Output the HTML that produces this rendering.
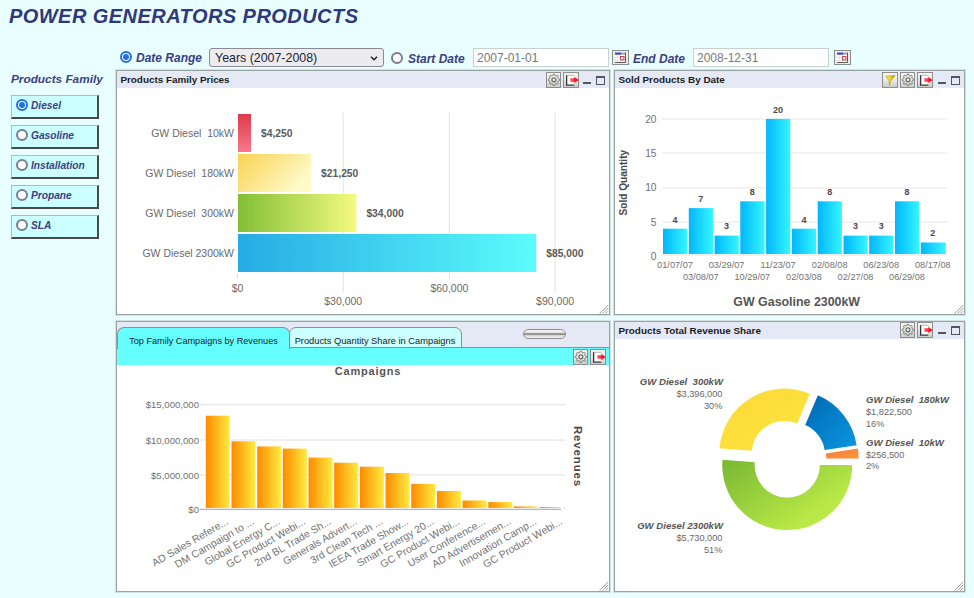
<!DOCTYPE html>
<html><head><meta charset="utf-8">
<style>
*{box-sizing:border-box;margin:0;padding:0}
html,body{width:974px;height:598px;overflow:hidden}
body{background:#e9fefe;font-family:"Liberation Sans",sans-serif;position:relative}
.a{position:absolute;white-space:nowrap}
.title{left:9px;top:4px;font-size:20px;line-height:24px;font-weight:bold;font-style:italic;color:#30377a;letter-spacing:0.45px}
.lbl{font-size:12px;line-height:14px;font-weight:bold;font-style:italic;color:#3b4080}
.radio{width:12px;height:12px;border-radius:50%;border:2px solid #7c7c8a;background:#fff}
.radio.on{border:2px solid #1f6fe8;background:#fff}
.radio.on::after{content:"";position:absolute;left:1px;top:1px;width:6px;height:6px;border-radius:50%;background:#1f6fe8}
.fbtn{left:11px;width:88px;height:24px;background:#ccffff;border-top:1px solid #b8b8b8;border-left:1px solid #b8b8b8;border-right:2px solid #4a4a4a;border-bottom:2px solid #4a4a4a}
.fbtn .radio{position:absolute;left:4px;top:2.5px}
.fbtn span{position:absolute;left:19px;top:3px;font-size:10.2px;line-height:14px;font-weight:bold;font-style:italic;color:#3b4080}
.sel{left:209px;top:48px;width:175px;height:19px;background:#ececef;border:1px solid #8a8a90;border-radius:3px;font-size:12.4px;line-height:19px;padding-left:5px;color:#22223a}
.inp{top:48px;height:19px;background:#fdfefe;border:1px solid #c8d0d0;font-size:12px;line-height:18.5px;padding-left:3px;color:#7a7a7a}
.cal{top:50px;width:17px;height:15px}
.panel{background:#fff;border:1px solid #9aa2a2;box-shadow:0 0 0 1px rgba(170,176,176,0.35)}
.ph{position:absolute;left:0;top:0;right:0;height:17px;background:#e4e9f5}
.pt{position:absolute;left:3.4px;top:2px;font-size:9.9px;line-height:13px;font-weight:bold;color:#1c1c1c}
.tab{position:absolute;top:4.8px;height:21px;border:1px solid #8e8e8e;border-radius:7px 7px 0 0;font-size:9.15px;line-height:19px;padding-top:4.6px;color:#222;text-align:center}
.strip{position:absolute;left:0;right:0;top:25.4px;height:17.6px;background:#66ffff;border-top:1px solid #909090}
</style></head>
<body>
<div class="a title">POWER GENERATORS PRODUCTS</div>

<!-- top controls -->
<div class="a radio on" style="left:120px;top:51px"></div>
<div class="a lbl" style="left:136px;top:51px">Date Range</div>
<div class="a sel">Years (2007-2008)<svg style="position:absolute;right:5px;top:7px" width="8" height="5" viewBox="0 0 8 5"><path d="M1 0.8 L4 3.8 L7 0.8" fill="none" stroke="#222" stroke-width="1.5"/></svg></div>
<div class="a radio" style="left:391px;top:52px"></div>
<div class="a lbl" style="left:408px;top:52px">Start Date</div>
<div class="a inp" style="left:473px;width:136px">2007-01-01</div>
<svg class="a cal" style="left:612px" width="17" height="15" viewBox="0 0 17 15"><rect x="0.5" y="0.5" width="16" height="14" fill="#ededed" stroke="#8c8c8c"/><rect x="3" y="2.5" width="10" height="10" fill="#fff"/><path d="M3 12.5H13.5V2.5" fill="none" stroke="#5a5a5a" stroke-width="1"/><rect x="3" y="2.5" width="6.5" height="2.2" fill="#3c48b4"/><rect x="9.5" y="2.5" width="3.5" height="2.2" fill="#a8a8a8"/><path d="M3 7.5H13M3 10.5H13M5.5 5V12M8.5 5V12" stroke="#dcdcdc" stroke-width="0.7"/><rect x="8.5" y="6.5" width="3.5" height="3.5" fill="#f4dcdc" stroke="#c24a4a" stroke-width="1"/></svg>
<div class="a lbl" style="left:633px;top:52px">End Date</div>
<div class="a inp" style="left:693px;width:136px">2008-12-31</div>
<svg class="a cal" style="left:834px" width="17" height="15" viewBox="0 0 17 15"><rect x="0.5" y="0.5" width="16" height="14" fill="#ededed" stroke="#8c8c8c"/><rect x="3" y="2.5" width="10" height="10" fill="#fff"/><path d="M3 12.5H13.5V2.5" fill="none" stroke="#5a5a5a" stroke-width="1"/><rect x="3" y="2.5" width="6.5" height="2.2" fill="#3c48b4"/><rect x="9.5" y="2.5" width="3.5" height="2.2" fill="#a8a8a8"/><path d="M3 7.5H13M3 10.5H13M5.5 5V12M8.5 5V12" stroke="#dcdcdc" stroke-width="0.7"/><rect x="8.5" y="6.5" width="3.5" height="3.5" fill="#f4dcdc" stroke="#c24a4a" stroke-width="1"/></svg>

<!-- left family -->
<div class="a lbl" style="left:11px;top:72px;font-size:11.8px">Products Family</div>
<div class="a fbtn" style="top:95px"><div class="radio on"></div><span>Diesel</span></div>
<div class="a fbtn" style="top:125px"><div class="radio"></div><span>Gasoline</span></div>
<div class="a fbtn" style="top:155px"><div class="radio"></div><span>Installation</span></div>
<div class="a fbtn" style="top:185px"><div class="radio"></div><span>Propane</span></div>
<div class="a fbtn" style="top:215px"><div class="radio"></div><span>SLA</span></div>

<!-- panels -->
<div class="a panel" style="left:116px;top:70px;width:494px;height:245px">
  <div class="ph"><div class="pt">Products Family Prices</div></div>
</div>
<div class="a panel" style="left:614px;top:70px;width:351px;height:245px">
  <div class="ph"><div class="pt">Sold Products By Date</div></div>
</div>
<div class="a panel" style="left:116px;top:321px;width:494px;height:271px">
  <div class="ph" style="height:26px"></div>
  <div class="strip"></div>
  <div class="tab" style="left:0;width:173px;background:#66ffff;border-bottom:none;height:22.4px">Top Family Campaigns by Revenues</div>
  <div class="tab" style="left:172px;width:173px;padding-right:1px;font-size:9.3px;background:#ccffff;height:21px;border-radius:7px 7px 0 0">Products Quantity Share in Campaigns</div>
</div>
<div class="a panel" style="left:614px;top:321px;width:351px;height:271px">
  <div class="ph"><div class="pt">Products Total Revenue Share</div></div>
</div>
<svg class="a" style="left:0;top:0" width="974" height="598" viewBox="0 0 974 598">
<defs>
 <linearGradient id="gRed" x1="0" y1="0" x2="0" y2="1"><stop offset="0" stop-color="#de3a4c"/><stop offset="1" stop-color="#f9788a"/></linearGradient>
 <linearGradient id="gYel" x1="0" y1="0" x2="1" y2="0.5"><stop offset="0" stop-color="#f8d252"/><stop offset="1" stop-color="#fffac8"/></linearGradient>
 <linearGradient id="gGrn" x1="0" y1="0" x2="1" y2="0"><stop offset="0" stop-color="#82bf36"/><stop offset="1" stop-color="#f4fa80"/></linearGradient>
 <linearGradient id="gBlu" x1="0" y1="0" x2="1" y2="0"><stop offset="0" stop-color="#26abe4"/><stop offset="1" stop-color="#5cfcfc"/></linearGradient>
 <linearGradient id="gCyan" x1="0" y1="0" x2="1" y2="0"><stop offset="0" stop-color="#02b6fc"/><stop offset="1" stop-color="#34f6ff"/></linearGradient>
 <linearGradient id="gOr" x1="0" y1="0" x2="1" y2="0"><stop offset="0" stop-color="#ff8a00"/><stop offset="1" stop-color="#ffec40"/></linearGradient>
 <linearGradient id="dGrn" x1="0" y1="0.1" x2="1" y2="0.9"><stop offset="0" stop-color="#7cba34"/><stop offset="0.75" stop-color="#b8e846"/><stop offset="1" stop-color="#c4f04a"/></linearGradient>
 <linearGradient id="dYel" x1="0" y1="0" x2="1" y2="1"><stop offset="0" stop-color="#fad83a"/><stop offset="1" stop-color="#ffe63c"/></linearGradient>
 <linearGradient id="dBlu" x1="0" y1="0" x2="1" y2="1"><stop offset="0" stop-color="#0068b4"/><stop offset="1" stop-color="#0a98e0"/></linearGradient>
 <linearGradient id="dOr" x1="0" y1="0" x2="1" y2="1"><stop offset="0" stop-color="#f27e36"/><stop offset="1" stop-color="#ff9440"/></linearGradient>
 <linearGradient id="btnG" x1="0" y1="0" x2="0" y2="1"><stop offset="0" stop-color="#f6f6f4"/><stop offset="0.5" stop-color="#ebebe8"/><stop offset="1" stop-color="#c9c9c5"/></linearGradient>
 <linearGradient id="pillG" x1="0" y1="0" x2="0" y2="1"><stop offset="0" stop-color="#fcfcfc"/><stop offset="0.35" stop-color="#e4e4e4"/><stop offset="0.5" stop-color="#6c6c6c"/><stop offset="0.65" stop-color="#d4d4d4"/><stop offset="1" stop-color="#fafafa"/></linearGradient>
 <linearGradient id="arrG" x1="0" y1="0" x2="1" y2="0"><stop offset="0" stop-color="#ff6070"/><stop offset="0.7" stop-color="#ff1020"/><stop offset="1" stop-color="#c00010"/></linearGradient>
 <linearGradient id="funG" x1="0" y1="0" x2="1" y2="0"><stop offset="0" stop-color="#f8e850"/><stop offset="0.55" stop-color="#e8d020"/><stop offset="1" stop-color="#a89000"/></linearGradient>
</defs>
<line x1="237.5" y1="273" x2="237.5" y2="279" stroke="#e2e2e2" stroke-width="1"/>
<text x="237.5" y="291.8" text-anchor="middle" font-size="10.5" fill="#6a6a6a" font-family="Liberation Sans">$0</text>
<line x1="343.2" y1="112.5" x2="343.2" y2="292" stroke="#e2e2e2" stroke-width="1"/>
<text x="343.2" y="304.7" text-anchor="middle" font-size="10.5" fill="#6a6a6a" font-family="Liberation Sans">$30,000</text>
<line x1="449.4" y1="112.5" x2="449.4" y2="279" stroke="#e2e2e2" stroke-width="1"/>
<text x="449.4" y="291.8" text-anchor="middle" font-size="10.5" fill="#6a6a6a" font-family="Liberation Sans">$60,000</text>
<line x1="555.1" y1="112.5" x2="555.1" y2="292" stroke="#e2e2e2" stroke-width="1"/>
<text x="555.1" y="304.7" text-anchor="middle" font-size="10.5" fill="#6a6a6a" font-family="Liberation Sans">$90,000</text>
<rect x="238" y="114" width="13.0" height="38" fill="url(#gRed)"/>
<text x="234" y="136.8" text-anchor="end" font-size="10.5" fill="#6a6a6a" xml:space="preserve" font-family="Liberation Sans">GW Diesel  10kW</text>
<text x="261.0" y="136.8" font-size="10.3" font-weight="bold" fill="#5a5a5a" font-family="Liberation Sans">$4,250</text>
<rect x="238" y="154" width="73.1" height="38" fill="url(#gYel)"/>
<text x="234" y="176.8" text-anchor="end" font-size="10.5" fill="#6a6a6a" xml:space="preserve" font-family="Liberation Sans">GW Diesel  180kW</text>
<text x="321.1" y="176.8" font-size="10.3" font-weight="bold" fill="#5a5a5a" font-family="Liberation Sans">$21,250</text>
<rect x="238" y="194" width="118.4" height="38" fill="url(#gGrn)"/>
<text x="234" y="216.8" text-anchor="end" font-size="10.5" fill="#6a6a6a" xml:space="preserve" font-family="Liberation Sans">GW Diesel  300kW</text>
<text x="366.4" y="216.8" font-size="10.3" font-weight="bold" fill="#5a5a5a" font-family="Liberation Sans">$34,000</text>
<rect x="238" y="234" width="298.2" height="38" fill="url(#gBlu)"/>
<text x="234" y="256.8" text-anchor="end" font-size="10.5" fill="#6a6a6a" xml:space="preserve" font-family="Liberation Sans">GW Diesel 2300kW</text>
<text x="546.2" y="256.8" font-size="10.3" font-weight="bold" fill="#5a5a5a" font-family="Liberation Sans">$85,000</text>
<line x1="662" y1="255.0" x2="947" y2="255.0" stroke="#eadede" stroke-width="1"/>
<text x="656.5" y="259.8" text-anchor="end" font-size="10.2" fill="#707070" font-family="Liberation Sans">0</text>
<line x1="662" y1="222.0" x2="947" y2="222.0" stroke="#e6e6e6" stroke-width="1"/>
<text x="656.5" y="225.5" text-anchor="end" font-size="10.2" fill="#707070" font-family="Liberation Sans">5</text>
<line x1="662" y1="188.0" x2="947" y2="188.0" stroke="#e6e6e6" stroke-width="1"/>
<text x="656.5" y="191.1" text-anchor="end" font-size="10.2" fill="#707070" font-family="Liberation Sans">10</text>
<line x1="662" y1="153.0" x2="947" y2="153.0" stroke="#e6e6e6" stroke-width="1"/>
<text x="656.5" y="156.8" text-anchor="end" font-size="10.2" fill="#707070" font-family="Liberation Sans">15</text>
<line x1="662" y1="119.0" x2="947" y2="119.0" stroke="#e6e6e6" stroke-width="1"/>
<text x="656.5" y="122.5" text-anchor="end" font-size="10.2" fill="#707070" font-family="Liberation Sans">20</text>
<rect x="663.0" y="228.7" width="24.2" height="25.3" fill="url(#gCyan)"/>
<text x="675.0" y="222.5" text-anchor="middle" font-size="9" font-weight="bold" fill="#4a4a4a" font-family="Liberation Sans">4</text>
<text x="675.0" y="268.2" text-anchor="middle" font-size="9.2" fill="#727272" font-family="Liberation Sans">01/07/07</text>
<rect x="688.8" y="208.1" width="24.2" height="45.9" fill="url(#gCyan)"/>
<text x="700.8" y="201.9" text-anchor="middle" font-size="9" font-weight="bold" fill="#4a4a4a" font-family="Liberation Sans">7</text>
<text x="700.8" y="280.2" text-anchor="middle" font-size="9.2" fill="#727272" font-family="Liberation Sans">03/08/07</text>
<rect x="714.6" y="235.6" width="24.2" height="18.4" fill="url(#gCyan)"/>
<text x="726.6" y="229.4" text-anchor="middle" font-size="9" font-weight="bold" fill="#4a4a4a" font-family="Liberation Sans">3</text>
<text x="726.6" y="268.2" text-anchor="middle" font-size="9.2" fill="#727272" font-family="Liberation Sans">03/29/07</text>
<rect x="740.3" y="201.3" width="24.2" height="52.7" fill="url(#gCyan)"/>
<text x="752.3" y="195.1" text-anchor="middle" font-size="9" font-weight="bold" fill="#4a4a4a" font-family="Liberation Sans">8</text>
<text x="752.3" y="280.2" text-anchor="middle" font-size="9.2" fill="#727272" font-family="Liberation Sans">10/29/07</text>
<rect x="766.1" y="118.9" width="24.2" height="135.1" fill="url(#gCyan)"/>
<text x="778.1" y="112.7" text-anchor="middle" font-size="9" font-weight="bold" fill="#4a4a4a" font-family="Liberation Sans">20</text>
<text x="778.1" y="268.2" text-anchor="middle" font-size="9.2" fill="#727272" font-family="Liberation Sans">11/23/07</text>
<rect x="791.9" y="228.7" width="24.2" height="25.3" fill="url(#gCyan)"/>
<text x="803.9" y="222.5" text-anchor="middle" font-size="9" font-weight="bold" fill="#4a4a4a" font-family="Liberation Sans">4</text>
<text x="803.9" y="280.2" text-anchor="middle" font-size="9.2" fill="#727272" font-family="Liberation Sans">02/03/08</text>
<rect x="817.7" y="201.3" width="24.2" height="52.7" fill="url(#gCyan)"/>
<text x="829.7" y="195.1" text-anchor="middle" font-size="9" font-weight="bold" fill="#4a4a4a" font-family="Liberation Sans">8</text>
<text x="829.7" y="268.2" text-anchor="middle" font-size="9.2" fill="#727272" font-family="Liberation Sans">02/08/08</text>
<rect x="843.5" y="235.6" width="24.2" height="18.4" fill="url(#gCyan)"/>
<text x="855.5" y="229.4" text-anchor="middle" font-size="9" font-weight="bold" fill="#4a4a4a" font-family="Liberation Sans">3</text>
<text x="855.5" y="280.2" text-anchor="middle" font-size="9.2" fill="#727272" font-family="Liberation Sans">02/27/08</text>
<rect x="869.2" y="235.6" width="24.2" height="18.4" fill="url(#gCyan)"/>
<text x="881.2" y="229.4" text-anchor="middle" font-size="9" font-weight="bold" fill="#4a4a4a" font-family="Liberation Sans">3</text>
<text x="881.2" y="268.2" text-anchor="middle" font-size="9.2" fill="#727272" font-family="Liberation Sans">06/23/08</text>
<rect x="895.0" y="201.3" width="24.2" height="52.7" fill="url(#gCyan)"/>
<text x="907.0" y="195.1" text-anchor="middle" font-size="9" font-weight="bold" fill="#4a4a4a" font-family="Liberation Sans">8</text>
<text x="907.0" y="280.2" text-anchor="middle" font-size="9.2" fill="#727272" font-family="Liberation Sans">06/29/08</text>
<rect x="920.8" y="242.5" width="25" height="11.5" fill="url(#gCyan)"/>
<text x="932.8" y="236.3" text-anchor="middle" font-size="9" font-weight="bold" fill="#4a4a4a" font-family="Liberation Sans">2</text>
<text x="932.8" y="268.2" text-anchor="middle" font-size="9.2" fill="#727272" font-family="Liberation Sans">08/17/08</text>
<text transform="translate(626.8,182.7) rotate(-90)" text-anchor="middle" font-size="10.1" font-weight="bold" fill="#4a4a4a" font-family="Liberation Sans">Sold Quantity</text>
<text x="796.7" y="305.8" text-anchor="middle" font-size="12.4" font-weight="bold" fill="#555" font-family="Liberation Sans">GW Gasoline 2300kW</text>
<line x1="200" y1="404.8" x2="566" y2="404.8" stroke="#e0e0e0" stroke-width="1"/>
<line x1="200" y1="440.0" x2="566" y2="440.0" stroke="#e0e0e0" stroke-width="1"/>
<line x1="200" y1="474.9" x2="566" y2="474.9" stroke="#e0e0e0" stroke-width="1"/>
<text x="199" y="408.40000000000003" text-anchor="end" font-size="9.6" fill="#707070" font-family="Liberation Sans">$15,000,000</text>
<text x="199" y="443.6" text-anchor="end" font-size="9.6" fill="#707070" font-family="Liberation Sans">$10,000,000</text>
<text x="199" y="478.5" text-anchor="end" font-size="9.6" fill="#707070" font-family="Liberation Sans">$5,000,000</text>
<text x="199" y="512.8" text-anchor="end" font-size="9.6" fill="#707070" font-family="Liberation Sans">$0</text>
<line x1="200" y1="509.3" x2="561" y2="509.3" stroke="#b4b4b4" stroke-width="1.2"/>
<rect x="205.8" y="415.7" width="24" height="92.3" fill="url(#gOr)"/>
<text transform="translate(229.1,523.6) rotate(-30)" text-anchor="end" font-size="10.4" fill="#747474" xml:space="preserve" font-family="Liberation Sans">AD Sales Refere...</text>
<rect x="231.5" y="441.3" width="24" height="66.7" fill="url(#gOr)"/>
<text transform="translate(254.8,523.6) rotate(-30)" text-anchor="end" font-size="10.4" fill="#747474" xml:space="preserve" font-family="Liberation Sans">DM Campaign to ...</text>
<rect x="257.2" y="446.4" width="24" height="61.6" fill="url(#gOr)"/>
<text transform="translate(280.5,523.6) rotate(-30)" text-anchor="end" font-size="10.4" fill="#747474" xml:space="preserve" font-family="Liberation Sans">Global Energy C...</text>
<rect x="282.8" y="448.6" width="24" height="59.4" fill="url(#gOr)"/>
<text transform="translate(306.1,523.6) rotate(-30)" text-anchor="end" font-size="10.4" fill="#747474" xml:space="preserve" font-family="Liberation Sans">GC Product Webi...</text>
<rect x="308.5" y="457.6" width="24" height="50.4" fill="url(#gOr)"/>
<text transform="translate(331.8,523.6) rotate(-30)" text-anchor="end" font-size="10.4" fill="#747474" xml:space="preserve" font-family="Liberation Sans">2nd BL Trade Sh...</text>
<rect x="334.2" y="462.7" width="24" height="45.3" fill="url(#gOr)"/>
<text transform="translate(357.5,523.6) rotate(-30)" text-anchor="end" font-size="10.4" fill="#747474" xml:space="preserve" font-family="Liberation Sans">Generals Advert...</text>
<rect x="359.9" y="466.7" width="24" height="41.3" fill="url(#gOr)"/>
<text transform="translate(383.2,523.6) rotate(-30)" text-anchor="end" font-size="10.4" fill="#747474" xml:space="preserve" font-family="Liberation Sans">3rd Clean Tech ...</text>
<rect x="385.6" y="473.0" width="24" height="35.0" fill="url(#gOr)"/>
<text transform="translate(408.9,523.6) rotate(-30)" text-anchor="end" font-size="10.4" fill="#747474" xml:space="preserve" font-family="Liberation Sans">IEEA Trade Show...</text>
<rect x="411.2" y="483.9" width="24" height="24.1" fill="url(#gOr)"/>
<text transform="translate(434.5,523.6) rotate(-30)" text-anchor="end" font-size="10.4" fill="#747474" xml:space="preserve" font-family="Liberation Sans">Smart Energy 20...</text>
<rect x="436.9" y="491.0" width="24" height="17.0" fill="url(#gOr)"/>
<text transform="translate(460.2,523.6) rotate(-30)" text-anchor="end" font-size="10.4" fill="#747474" xml:space="preserve" font-family="Liberation Sans">GC Product Webi...</text>
<rect x="462.6" y="500.5" width="24" height="7.5" fill="url(#gOr)"/>
<text transform="translate(485.9,523.6) rotate(-30)" text-anchor="end" font-size="10.4" fill="#747474" xml:space="preserve" font-family="Liberation Sans">User Conference...</text>
<rect x="488.3" y="502.1" width="24" height="5.9" fill="url(#gOr)"/>
<text transform="translate(511.6,523.6) rotate(-30)" text-anchor="end" font-size="10.4" fill="#747474" xml:space="preserve" font-family="Liberation Sans">AD Advertisemen...</text>
<rect x="514.0" y="506.4" width="24" height="1.6" fill="url(#gOr)"/>
<text transform="translate(537.3,523.6) rotate(-30)" text-anchor="end" font-size="10.4" fill="#747474" xml:space="preserve" font-family="Liberation Sans">Innovation Camp...</text>
<rect x="539.6" y="507.0" width="20.8" height="1.0" fill="url(#gOr)"/>
<text transform="translate(562.9,523.6) rotate(-30)" text-anchor="end" font-size="10.4" fill="#747474" xml:space="preserve" font-family="Liberation Sans">GC Product Webi...</text>
<rect x="563" y="507.3" width="2" height="0.8" fill="#ffe060"/>
<text x="368" y="374.9" text-anchor="middle" font-size="11" font-weight="bold" letter-spacing="0.8" fill="#555" font-family="Liberation Sans">Campaigns</text>
<text transform="translate(574.2,456.5) rotate(90)" text-anchor="middle" font-size="11.4" font-weight="bold" letter-spacing="0.9" fill="#484848" font-family="Liberation Sans">Revenues</text>
<path d="M852.24 465.09 A65.0 65.0 0 1 1 722.47 459.66 L754.75 462.37 A32.6 32.6 0 1 0 819.84 465.09 Z" fill="url(#dGrn)"/>
<path d="M719.53 448.15 A65.0 65.0 0 0 1 809.80 393.80 L797.09 423.60 A32.6 32.6 0 0 0 751.82 450.86 Z" fill="url(#dYel)"/>
<path d="M817.90 395.31 A65.0 65.0 0 0 1 856.63 445.15 L824.61 450.11 A32.6 32.6 0 0 0 805.19 425.11 Z" fill="url(#dBlu)"/>
<path d="M857.92 448.48 A65.0 65.0 0 0 1 858.68 458.42 L826.28 458.42 A32.6 32.6 0 0 0 825.90 453.44 Z" fill="url(#dOr)"/>
<text x="723" y="384.8" text-anchor="end" font-size="9.6" font-weight="bold" font-style="italic" fill="#555" xml:space="preserve" font-family="Liberation Sans">GW Diesel  300kW</text>
<text x="722.4" y="396.8" text-anchor="end" font-size="9.2" fill="#686868" font-family="Liberation Sans">$3,396,000</text>
<text x="722.4" y="408.6" text-anchor="end" font-size="9.2" fill="#686868" font-family="Liberation Sans">30%</text>
<text x="866" y="403.2" text-anchor="start" font-size="9.6" font-weight="bold" font-style="italic" fill="#555" xml:space="preserve" font-family="Liberation Sans">GW Diesel  180kW</text>
<text x="866" y="415.2" text-anchor="start" font-size="9.2" fill="#686868" font-family="Liberation Sans">$1,822,500</text>
<text x="866" y="427.0" text-anchor="start" font-size="9.2" fill="#686868" font-family="Liberation Sans">16%</text>
<text x="866" y="445.5" text-anchor="start" font-size="9.6" font-weight="bold" font-style="italic" fill="#555" xml:space="preserve" font-family="Liberation Sans">GW Diesel  10kW</text>
<text x="866" y="457.5" text-anchor="start" font-size="9.2" fill="#686868" font-family="Liberation Sans">$256,500</text>
<text x="866" y="469.3" text-anchor="start" font-size="9.2" fill="#686868" font-family="Liberation Sans">2%</text>
<text x="723" y="528.8" text-anchor="end" font-size="9.6" font-weight="bold" font-style="italic" fill="#555" xml:space="preserve" font-family="Liberation Sans">GW Diesel 2300kW</text>
<text x="722.4" y="540.8" text-anchor="end" font-size="9.2" fill="#686868" font-family="Liberation Sans">$5,730,000</text>
<text x="722.4" y="552.5999999999999" text-anchor="end" font-size="9.2" fill="#686868" font-family="Liberation Sans">51%</text>
<rect x="546.5" y="72.5" width="14" height="15" fill="url(#btnG)" stroke="#8e8e8e" stroke-width="1"/><polygon points="559.60,79.80 559.57,80.36 558.71,80.76 558.01,81.05 557.87,81.45 557.69,81.83 557.97,82.52 558.31,83.42 557.93,83.83 557.52,84.21 556.62,83.87 555.93,83.59 555.55,83.77 555.15,83.91 554.86,84.61 554.46,85.47 553.90,85.50 553.34,85.47 552.94,84.61 552.65,83.91 552.25,83.77 551.87,83.59 551.18,83.87 550.28,84.21 549.87,83.83 549.49,83.42 549.83,82.52 550.11,81.83 549.93,81.45 549.79,81.05 549.09,80.76 548.23,80.36 548.20,79.80 548.23,79.24 549.09,78.84 549.79,78.55 549.93,78.15 550.11,77.77 549.83,77.08 549.49,76.18 549.87,75.77 550.28,75.39 551.18,75.73 551.87,76.01 552.25,75.83 552.65,75.69 552.94,74.99 553.34,74.13 553.90,74.10 554.46,74.13 554.86,74.99 555.15,75.69 555.55,75.83 555.93,76.01 556.62,75.73 557.52,75.39 557.93,75.77 558.31,76.18 557.97,77.08 557.69,77.77 557.87,78.15 558.01,78.55 558.71,78.84 559.57,79.24" fill="none" stroke="#666" stroke-width="0.9"/><circle cx="553.9" cy="79.8" r="2" fill="none" stroke="#6a6a6a" stroke-width="1.2"/>
<rect x="563.5" y="72.5" width="15" height="15" fill="url(#btnG)" stroke="#8e8e8e" stroke-width="1"/><path d="M566.5 75.5 H573.5 L574.8 76.8 V85.5 H566.5 Z" fill="#fff"/><path d="M566.5 75.3 H573.5 L574.8 76.6" fill="none" stroke="#b8b8b8" stroke-width="1"/><path d="M566.6 75.2 V85.2 H574.5" fill="none" stroke="#333" stroke-width="1.3"/><path d="M570.3 78.2 H574.3 V76.8 L578.4 80 L574.3 83.2 V81.8 H570.3 Z" fill="url(#arrG)"/>
<rect x="583" y="82" width="8" height="2" fill="#505562"/><rect x="596.5" y="76.5" width="8" height="8" fill="none" stroke="#505562" stroke-width="1"/><rect x="596" y="76" width="9" height="2" fill="#505562"/>
<rect x="882.5" y="72.5" width="15" height="15" fill="url(#btnG)" stroke="#8e8e8e" stroke-width="1"/><path d="M885.8 76.2 L895.2 75.4 L891.2 80.6 L889.4 85.4 L888.9 80.6 Z" fill="url(#funG)" stroke="#a89000" stroke-width="0.5"/>
<rect x="900.5" y="72.5" width="14" height="15" fill="url(#btnG)" stroke="#8e8e8e" stroke-width="1"/><polygon points="913.60,79.80 913.57,80.36 912.71,80.76 912.01,81.05 911.87,81.45 911.69,81.83 911.97,82.52 912.31,83.42 911.93,83.83 911.52,84.21 910.62,83.87 909.93,83.59 909.55,83.77 909.15,83.91 908.86,84.61 908.46,85.47 907.90,85.50 907.34,85.47 906.94,84.61 906.65,83.91 906.25,83.77 905.87,83.59 905.18,83.87 904.28,84.21 903.87,83.83 903.49,83.42 903.83,82.52 904.11,81.83 903.93,81.45 903.79,81.05 903.09,80.76 902.23,80.36 902.20,79.80 902.23,79.24 903.09,78.84 903.79,78.55 903.93,78.15 904.11,77.77 903.83,77.08 903.49,76.18 903.87,75.77 904.28,75.39 905.18,75.73 905.87,76.01 906.25,75.83 906.65,75.69 906.94,74.99 907.34,74.13 907.90,74.10 908.46,74.13 908.86,74.99 909.15,75.69 909.55,75.83 909.93,76.01 910.62,75.73 911.52,75.39 911.93,75.77 912.31,76.18 911.97,77.08 911.69,77.77 911.87,78.15 912.01,78.55 912.71,78.84 913.57,79.24" fill="none" stroke="#666" stroke-width="0.9"/><circle cx="907.9" cy="79.8" r="2" fill="none" stroke="#6a6a6a" stroke-width="1.2"/>
<rect x="917.5" y="72.5" width="15" height="15" fill="url(#btnG)" stroke="#8e8e8e" stroke-width="1"/><path d="M920.5 75.5 H927.5 L928.8 76.8 V85.5 H920.5 Z" fill="#fff"/><path d="M920.5 75.3 H927.5 L928.8 76.6" fill="none" stroke="#b8b8b8" stroke-width="1"/><path d="M920.6 75.2 V85.2 H928.5" fill="none" stroke="#333" stroke-width="1.3"/><path d="M924.3 78.2 H928.3 V76.8 L932.4 80 L928.3 83.2 V81.8 H924.3 Z" fill="url(#arrG)"/>
<rect x="938" y="82" width="8" height="2" fill="#505562"/><rect x="951.5" y="76.5" width="8" height="8" fill="none" stroke="#505562" stroke-width="1"/><rect x="951" y="76" width="9" height="2" fill="#505562"/>
<rect x="900.5" y="322.5" width="14" height="15" fill="url(#btnG)" stroke="#8e8e8e" stroke-width="1"/><polygon points="913.60,329.80 913.57,330.36 912.71,330.76 912.01,331.05 911.87,331.45 911.69,331.83 911.97,332.52 912.31,333.42 911.93,333.83 911.52,334.21 910.62,333.87 909.93,333.59 909.55,333.77 909.15,333.91 908.86,334.61 908.46,335.47 907.90,335.50 907.34,335.47 906.94,334.61 906.65,333.91 906.25,333.77 905.87,333.59 905.18,333.87 904.28,334.21 903.87,333.83 903.49,333.42 903.83,332.52 904.11,331.83 903.93,331.45 903.79,331.05 903.09,330.76 902.23,330.36 902.20,329.80 902.23,329.24 903.09,328.84 903.79,328.55 903.93,328.15 904.11,327.77 903.83,327.08 903.49,326.18 903.87,325.77 904.28,325.39 905.18,325.73 905.87,326.01 906.25,325.83 906.65,325.69 906.94,324.99 907.34,324.13 907.90,324.10 908.46,324.13 908.86,324.99 909.15,325.69 909.55,325.83 909.93,326.01 910.62,325.73 911.52,325.39 911.93,325.77 912.31,326.18 911.97,327.08 911.69,327.77 911.87,328.15 912.01,328.55 912.71,328.84 913.57,329.24" fill="none" stroke="#666" stroke-width="0.9"/><circle cx="907.9" cy="329.8" r="2" fill="none" stroke="#6a6a6a" stroke-width="1.2"/>
<rect x="917.5" y="322.5" width="15" height="15" fill="url(#btnG)" stroke="#8e8e8e" stroke-width="1"/><path d="M920.5 325.5 H927.5 L928.8 326.8 V335.5 H920.5 Z" fill="#fff"/><path d="M920.5 325.3 H927.5 L928.8 326.6" fill="none" stroke="#b8b8b8" stroke-width="1"/><path d="M920.6 325.2 V335.2 H928.5" fill="none" stroke="#333" stroke-width="1.3"/><path d="M924.3 328.2 H928.3 V326.8 L932.4 330 L928.3 333.2 V331.8 H924.3 Z" fill="url(#arrG)"/>
<rect x="938" y="332" width="8" height="2" fill="#505562"/><rect x="951.5" y="326.5" width="8" height="8" fill="none" stroke="#505562" stroke-width="1"/><rect x="951" y="326" width="9" height="2" fill="#505562"/>
<rect x="573.5" y="349.5" width="14" height="15" fill="url(#btnG)" stroke="#8e8e8e" stroke-width="1"/><polygon points="586.60,356.80 586.57,357.36 585.71,357.76 585.01,358.05 584.87,358.45 584.69,358.83 584.97,359.52 585.31,360.42 584.93,360.83 584.52,361.21 583.62,360.87 582.93,360.59 582.55,360.77 582.15,360.91 581.86,361.61 581.46,362.47 580.90,362.50 580.34,362.47 579.94,361.61 579.65,360.91 579.25,360.77 578.87,360.59 578.18,360.87 577.28,361.21 576.87,360.83 576.49,360.42 576.83,359.52 577.11,358.83 576.93,358.45 576.79,358.05 576.09,357.76 575.23,357.36 575.20,356.80 575.23,356.24 576.09,355.84 576.79,355.55 576.93,355.15 577.11,354.77 576.83,354.08 576.49,353.18 576.87,352.77 577.28,352.39 578.18,352.73 578.87,353.01 579.25,352.83 579.65,352.69 579.94,351.99 580.34,351.13 580.90,351.10 581.46,351.13 581.86,351.99 582.15,352.69 582.55,352.83 582.93,353.01 583.62,352.73 584.52,352.39 584.93,352.77 585.31,353.18 584.97,354.08 584.69,354.77 584.87,355.15 585.01,355.55 585.71,355.84 586.57,356.24" fill="none" stroke="#666" stroke-width="0.9"/><circle cx="580.9" cy="356.8" r="2" fill="none" stroke="#6a6a6a" stroke-width="1.2"/>
<rect x="590.5" y="349.5" width="15" height="15" fill="url(#btnG)" stroke="#8e8e8e" stroke-width="1"/><path d="M593.5 352.5 H600.5 L601.8 353.8 V362.5 H593.5 Z" fill="#fff"/><path d="M593.5 352.3 H600.5 L601.8 353.6" fill="none" stroke="#b8b8b8" stroke-width="1"/><path d="M593.6 352.2 V362.2 H601.5" fill="none" stroke="#333" stroke-width="1.3"/><path d="M597.3 355.2 H601.3 V353.8 L605.4 357 L601.3 360.2 V358.8 H597.3 Z" fill="url(#arrG)"/>
<rect x="523.5" y="329.5" width="42" height="9" rx="4.5" fill="url(#pillG)" stroke="#909090" stroke-width="1"/>
<line x1="605.7" y1="313.6" x2="608.2" y2="311.1" stroke="#5e5e5e" stroke-width="0.9" stroke-dasharray="1.2 0.4"/><line x1="602.7" y1="313.6" x2="608.2" y2="308.1" stroke="#5e5e5e" stroke-width="0.9" stroke-dasharray="1.2 0.4"/><line x1="599.7" y1="313.6" x2="608.2" y2="305.1" stroke="#5e5e5e" stroke-width="0.9" stroke-dasharray="1.2 0.4"/>
<line x1="960.7" y1="313.6" x2="963.2" y2="311.1" stroke="#5e5e5e" stroke-width="0.9" stroke-dasharray="1.2 0.4"/><line x1="957.7" y1="313.6" x2="963.2" y2="308.1" stroke="#5e5e5e" stroke-width="0.9" stroke-dasharray="1.2 0.4"/><line x1="954.7" y1="313.6" x2="963.2" y2="305.1" stroke="#5e5e5e" stroke-width="0.9" stroke-dasharray="1.2 0.4"/>
<line x1="605.7" y1="590.4" x2="608.2" y2="587.9" stroke="#5e5e5e" stroke-width="0.9" stroke-dasharray="1.2 0.4"/><line x1="602.7" y1="590.4" x2="608.2" y2="584.9" stroke="#5e5e5e" stroke-width="0.9" stroke-dasharray="1.2 0.4"/><line x1="599.7" y1="590.4" x2="608.2" y2="581.9" stroke="#5e5e5e" stroke-width="0.9" stroke-dasharray="1.2 0.4"/>
<line x1="960.7" y1="590.4" x2="963.2" y2="587.9" stroke="#5e5e5e" stroke-width="0.9" stroke-dasharray="1.2 0.4"/><line x1="957.7" y1="590.4" x2="963.2" y2="584.9" stroke="#5e5e5e" stroke-width="0.9" stroke-dasharray="1.2 0.4"/><line x1="954.7" y1="590.4" x2="963.2" y2="581.9" stroke="#5e5e5e" stroke-width="0.9" stroke-dasharray="1.2 0.4"/></svg>
</body></html>
